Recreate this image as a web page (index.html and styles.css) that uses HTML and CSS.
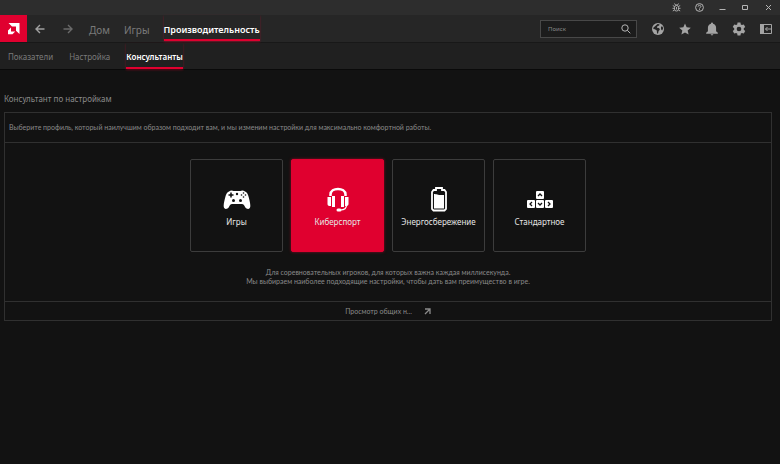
FILE: index.html
```html
<!DOCTYPE html>
<html lang="ru">
<head>
    <meta charset="UTF-8">
    <meta name="viewport" content="width=device-width, initial-scale=1.0">
    <title>AMD Software</title>
    <link rel="stylesheet" href="styles.css">
</head>
<body>
    <!-- Window title bar -->
    <div class="titlebar">
        <button class="window-button" aria-label="Сообщить об ошибке">
            <svg width="9" height="9" viewBox="0 0 9 9" fill="none" stroke="currentColor" stroke-width=".9">
                <rect x="2.5" y="2.5" width="4" height="5.5" rx="1.8"></rect>
                <path d="M2.5 .5l1 1.500h2l1-1.500M.8 2.500l1.700 1M8.200 2.500l-1.700 1M.5 5.300h2M6.500 5.300h2M.8 8l1.700-1M8.200 8l-1.700-1M4.500 4v2.500"></path>
            </svg>
        </button>
        <button class="window-button" aria-label="Справка">
            <svg width="9" height="9" viewBox="0 0 9 9" fill="none" stroke="currentColor">
                <circle cx="4.5" cy="4.5" r="3.9"></circle>
                <path d="M3.1 3.6c0-1.8 2.8-1.6 2.8 0 0 .9-1.4 .9-1.4 1.9M4.5 6.2v1"></path>
            </svg>
        </button>
        <button class="window-button" aria-label="Свернуть">
            <svg width="9" height="9" viewBox="0 0 9 9" fill="none" stroke="currentColor">
                <path d="M1.5 6.5h6"></path>
            </svg>
        </button>
        <button class="window-button" aria-label="Развернуть">
            <svg width="9" height="9" viewBox="0 0 9 9" fill="none" stroke="currentColor">
                <path d="M1.500 2.500h5v4h-5z"></path>
            </svg>
        </button>
        <button class="window-button" aria-label="Закрыть">
            <svg width="9" height="9" viewBox="0 0 9 9" fill="none" stroke="currentColor">
                <path d="M2 2l5 5M7 2l-5 5"></path>
            </svg>
        </button>
    </div>

    <!-- Main navigation -->
    <header class="navbar">
        <a href="#" class="logo" aria-label="AMD">
            <svg width="13" height="13" viewBox="0 0 13 13" fill="currentColor">
                <path d="M1.500 1H12.500v11L9 8.700V4.500H5z"></path>
                <path d="M4 5.500v4h4.200L5.500 12.300H1V8.500z"></path>
            </svg>
        </a>
        <button class="arrow" aria-label="Назад">
            <svg width="10" height="10" viewBox="0 0 10 10" fill="none" stroke="currentColor" stroke-width="1.4">
                <path d="M9.5 5H1.2M5 1L1 5l4 4"></path>
            </svg>
        </button>
        <button class="arrow forward" aria-label="Вперед">
            <svg width="10" height="10" viewBox="0 0 10 10" fill="none" stroke="currentColor" stroke-width="1.4">
                <path d="M.5 5h8.3M5 1l4 4-4 4"></path>
            </svg>
        </button>
        <nav class="main-nav">
            <a href="#">Дом</a>
            <a href="#">Игры</a>
            <a href="#" class="active">Производительность</a>
        </nav>
        <div class="search">
            <input type="search" class="search-input" placeholder="Поиск" aria-label="Поиск">
            <svg width="10" height="10" viewBox="0 0 10 10" fill="none" stroke="currentColor">
                <circle cx="4" cy="4" r="3.2"></circle>
                <path d="M6.3 6.3l3 3"></path>
            </svg>
        </div>
        <div class="tools">
            <button class="tool" aria-label="Интернет">
                <svg width="14" height="14" viewBox="0 0 14 14">
                    <circle cx="7" cy="7" r="6" fill="currentColor"></circle>
                    <path d="M6.500 2l2 .2-.3 1.400-1.800.6-.5 1.500 2.200.2.8 1.800-1.300 1.400-.6 2.600-1-.5-.2-2.700-1.900-1.200-1.600-.4.2-1.300 1.500-1.300zM10 4.400l1.800.4.3 2-1 1.600-1.100-1.200z" fill="#262626"></path>
                </svg>
            </button>
            <button class="tool" aria-label="Избранное">
                <svg width="14" height="14" viewBox="0 0 24 24" fill="currentColor">
                    <path d="M12 17.8L18.2 21.500l-1.640-7.030L22 9.740l-7.190-.61L12 2.500 9.190 9.130 2 9.740l5.460 4.730L5.820 21.500z"></path>
                </svg>
            </button>
            <button class="tool" aria-label="Уведомления">
                <svg width="14" height="14" viewBox="0 0 24 24" fill="currentColor">
                    <path d="M12 23c1.200 0 2.200-.9 2.200-2H9.800c0 1.100 1 2 2.200 2zM19 16v-6c0-3.400-2-6-5.200-6.800V2.500a1.800 1.800 0 0 0-3.600 0v.7C7 4 5 6.600 5 10v6l-3 2.500V20h20v-1.500z"></path>
                </svg>
            </button>
            <button class="tool" aria-label="Настройки">
                <svg width="14" height="14" viewBox="0 0 24 24" fill="currentColor">
                    <path fill-rule="evenodd" d="M9.500 1h5l.6 3.200 2 1.100 3.100-1.100 2.500 4.300-2.500 2.200v2.600l2.500 2.200-2.500 4.300-3.100-1.100-2 1.100-.6 3.200h-5l-.6-3.200-2-1.100-3.100 1.100-2.500-4.300 2.500-2.200v-2.600L1.300 8.500l2.500-4.300 3.100 1.100 2-1.100zM12 8a4 4 0 1 0 0 8 4 4 0 0 0 0-8z"></path>
                </svg>
            </button>
            <button class="tool" aria-label="Боковая панель">
                <svg width="14" height="14" viewBox="0 0 14 14" fill="none" stroke="currentColor">
                    <path d="M1.500 2.500h11v9h-11z"></path>
                    <path d="M1 2h4v10H1z" fill="currentColor" stroke="none"></path>
                    <path d="M12 7H6.500M8.500 5l-2 2 2 2"></path>
                </svg>
            </button>
        </div>
    </header>

    <!-- Section tabs -->
    <nav class="sub-nav">
        <a href="#">Показатели</a>
        <a href="#">Настройка</a>
        <a href="#" class="active">Консультанты</a>
    </nav>

    <main class="content">
        <h1>Консультант по настройкам</h1>
        <section class="panel">
            <p class="panel-intro">Выберите профиль, который наилучшим образом подходит вам, и мы изменим настройки для максимально комфортной работы.</p>

            <div class="panel-body">
                <div class="profiles">
                    <button class="profile">
                        <svg width="28" height="28" viewBox="0 0 28 28">
                            <path d="M6 6.500C7.500 5.200 9.500 5.300 10.500 6h7c1-.7 3-.8 4.500.5 2 .8 3 2.500 3.800 6 .9 3.700 2.300 8.500 1 10.500-1.300 1.600-3.300.9-4.600-.8C21 20 20.500 19 19 19H9c-1.500 0-2 1-3.200 3.200-1.300 1.700-3.300 2.400-4.600.8-1.300-2 .1-6.800 1-10.500C3 9 4 7.300 6 6.500z" fill="#fff"></path>
                            <path d="M8 7.500v5M5.500 10h5" stroke="#121212" stroke-width="1.500"></path>
                            <g fill="#121212">
                                <circle cx="14" cy="9" r="1.200"></circle>
                                <circle cx="10.500" cy="15.500" r="1.500"></circle>
                                <circle cx="17.500" cy="15.500" r="1.500"></circle>
                                <circle cx="20.500" cy="8" r=".8"></circle>
                                <circle cx="20.500" cy="12" r=".8"></circle>
                                <circle cx="18.500" cy="10" r=".8"></circle>
                                <circle cx="22.500" cy="10" r=".8"></circle>
                            </g>
                        </svg>
                        Игры
                    </button>
                    <button class="profile selected">
                        <svg width="28" height="28" viewBox="0 0 28 28" fill="none" stroke="#fff">
                            <path d="M6.500 11V9.500c0-7.500 15-7.500 15 0V11" stroke-width="2.500"></path>
                            <path d="M22.500 20c0 3-2 5-6 5" stroke-width="1.200"></path>
                            <g fill="#fff" stroke="none">
                                <path d="M3.500 12H7v9H5.500c-1.200 0-2-1-2-2zM8 11h3v11H8zM17 11h3v11h-3zM21 12h3.500v7c0 1-.8 2-2 2H21z"></path>
                                <rect x="12.500" y="23.500" width="5" height="3" rx="1.500"></rect>
                            </g>
                        </svg>
                        Киберспорт
                    </button>
                    <button class="profile">
                        <svg width="28" height="28" viewBox="0 0 28 28">
                            <path d="M11 3h6v2h2.500L21 7v17l-1.500 1.500h-11L7 24V7l1.500-2H11z" fill="none" stroke="#fff" stroke-width="1.800"></path>
                            <path d="M9 9c3 0 4 1.500 10 1v13.500H9z" fill="#fff"></path>
                        </svg>
                        Энергосбережение
                    </button>
                    <button class="profile">
                        <svg width="28" height="28" viewBox="0 0 28 28">
                            <g fill="#fff">
                                <rect x="10" y="6" width="8" height="8" rx="1"></rect>
                                <rect x="1" y="15" width="8" height="8" rx="1"></rect>
                                <rect x="10" y="15" width="8" height="8" rx="1"></rect>
                                <rect x="19" y="15" width="8" height="8" rx="1"></rect>
                            </g>
                            <path d="M12 11l2-2 2 2M6 17l-2 2 2 2M12 18l2 2 2-2M22 17l2 2-2 2" fill="none" stroke="#121212" stroke-width="1.300"></path>
                        </svg>
                        Стандартное
                    </button>
                </div>
                <p class="description">Для соревновательных игроков, для которых важна каждая миллисекунда.<br>Мы выбираем наиболее подходящие настройки, чтобы дать вам преимущество в игре.</p>
            </div>

            <a href="#" class="panel-link">
                Просмотр общих н...
                <svg width="7" height="7" viewBox="0 0 7 7" fill="none" stroke="currentColor" stroke-width="1.300">
                    <path d="M1 1h5v5M6 1L1 6"></path>
                </svg>
            </a>
        </section>
    </main>
</body>
</html>
```
FILE: styles.css
```css
* {
    box-sizing: border-box;
}

body {
    margin: 0;
    min-height: 100vh;
    background-color: #121212;
    color: #8a8a8a;
    font-family: "Noto Sans", "Open Sans", sans-serif;
    font-size: 8px;
}

a {
    color: inherit;
    text-decoration: none;
}

button {
    padding: 0;
    border: none;
    background: none;
    color: inherit;
    font-family: inherit;
    cursor: pointer;
}

svg {
    display: block;
    flex-shrink: 0;
}

.titlebar {
    display: flex;
    justify-content: flex-end;
    align-items: center;
    gap: 14px;
    height: 15px;
    padding-right: 7px;
    background-color: #2d2d2d;
    color: #b4b4b4;
}

.navbar {
    display: flex;
    align-items: center;
    height: 27px;
    background-color: #262626;
}

.logo {
    display: flex;
    align-items: center;
    justify-content: center;
    width: 27px;
    height: 27px;
    background-color: #e0002f;
    color: white;
}

.arrow {
    margin-left: 8px;
    color: #a0a0a0;
}

.forward {
    margin-left: 18px;
    color: #6a6a6a;
}

.main-nav {
    display: flex;
    align-self: stretch;
    gap: 14px;
    margin-left: 16px;
    font-size: 10px;
    line-height: 30px;
    color: #7a7a7a;
}

.main-nav .active,
.sub-nav .active {
    color: white;
    font-weight: 600;
    box-shadow: inset 0 -2px #e0002f, 0 1px 2px rgba(224, 0, 47, 0.4);
}

.main-nav .active {
    height: 26px;
    font-size: 9px;
}

.search {
    display: flex;
    align-items: center;
    width: 97px;
    height: 18px;
    margin-left: auto;
    padding: 0 5px 0 7px;
    border: 1px solid #484848;
    background-color: #1c1c1c;
    color: #b4b4b4;
}

.search-input {
    flex: 1;
    min-width: 0;
    padding: 0;
    border: none;
    outline: none;
    background: none;
    color: inherit;
    font-family: inherit;
    font-size: 6px;
}

.search-input::placeholder {
    color: #8a8a8a;
}

.tools {
    display: flex;
    gap: 13px;
    margin: 0 7px 0 14px;
    color: #a4a4a4;
}

.sub-nav {
    display: flex;
    gap: 16px;
    height: 28px;
    padding-left: 8px;
    border-top: 1px solid #181818;
    border-bottom: 1px solid #0a0a0a;
    background-color: #202020;
    font-size: 8px;
    line-height: 27px;
    color: #7a7a7a;
}

.sub-nav .active {
    height: 26px;
}

.content {
    padding: 23px 8px 24px 4px;
}

h1 {
    margin: 0 0 7px;
    font-size: 8px;
    font-weight: 400;
    line-height: 12px;
}

.panel {
    border: 1px solid #303030;
}

.panel-intro {
    margin: 0;
    padding: 0 4px;
    border-bottom: 1px solid #303030;
    line-height: 29px;
}

.panel-intro,
.description,
.panel-link {
    font-family: Lato, "Noto Sans", sans-serif;
    font-size: 7px;
}

.panel-body {
    padding: 16px 8px 15px;
}

.profiles {
    display: flex;
    justify-content: center;
    gap: 8px;
}

.profile {
    display: flex;
    flex-direction: column;
    align-items: center;
    gap: 2px;
    width: 93px;
    height: 93px;
    padding-top: 25px;
    border: 1px solid #3c3c3c;
    border-radius: 2px;
    color: #e6e6e6;
    font-size: 8px;
    line-height: 14px;
}

.profile.selected {
    border-color: #e0002f;
    background-color: #e0002f;
    box-shadow: 0 0 3px rgba(224, 0, 47, 0.6);
}

.description {
    margin: 16px 0 0;
    line-height: 9px;
    text-align: center;
}

.panel-link {
    display: flex;
    align-items: center;
    justify-content: center;
    gap: 12px;
    border-top: 1px solid #303030;
    line-height: 18px;
}
```
